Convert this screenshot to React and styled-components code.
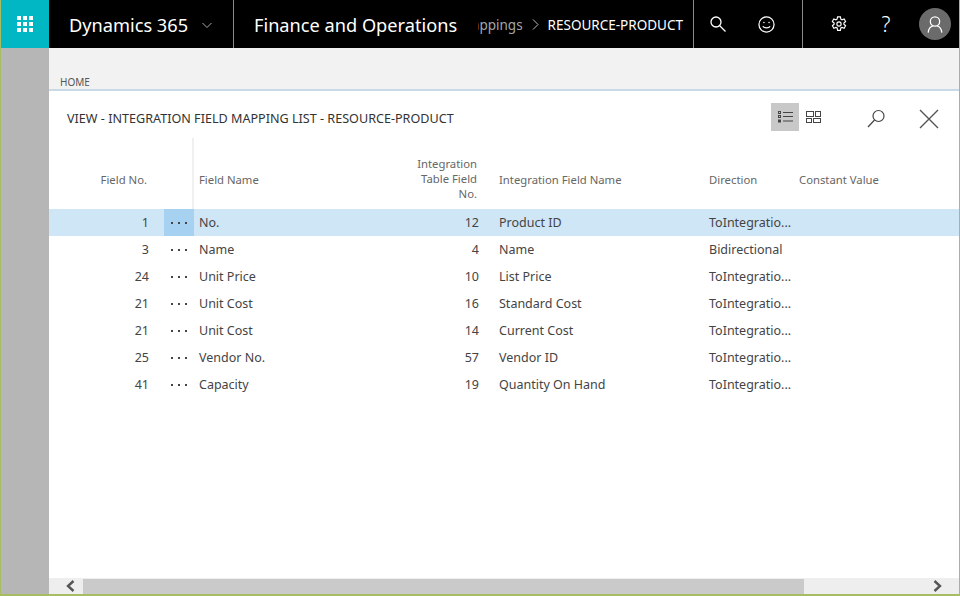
import React from 'react';
import styled, { createGlobalStyle } from 'styled-components';

const GlobalStyle = createGlobalStyle`
  html, body {
    margin: 0;
    padding: 0;
    background: #fff;
    overflow: hidden;
  }
  * { box-sizing: border-box; }
`;

const fontStack = '"Noto Sans", "Open Sans", "Liberation Sans", sans-serif';

const Frame = styled.div`
  width: 960px;
  height: 596px;
  display: flex;
  flex-direction: column;
  border: 1px solid #a6bd63;
  border-top: 0;
  border-bottom-width: 2px;
  font-family: ${fontStack};
  overflow: hidden;
`;

// Top navigation bar
const TopBar = styled.header`
  height: 48px;
  flex: none;
  display: flex;
  align-items: stretch;
  background: #000;
  color: #fff;
  & > * { flex: none; }
`;

const Waffle = styled.button`
  width: 48px;
  border: 0;
  padding: 0;
  background: #00b7c3;
  display: flex;
  align-items: center;
  justify-content: center;
`;

const BrandArea = styled.div`
  width: 185px;
  display: flex;
  align-items: center;
  padding: 2px 0 0 20px;
  gap: 14px;
  font-size: 18.2px;
  border-right: 1px solid #8a8a8a;
`;

const AppName = styled.div`
  width: 244px;
  padding: 2px 0 0 20px;
  display: flex;
  align-items: center;
  font-size: 18.2px;
  white-space: nowrap;
`;

const Crumbs = styled.div`
  width: 216px;
  display: flex;
  align-items: center;
  justify-content: flex-end;
  gap: 9px;
  padding: 1px 10px 0 0;
  overflow: hidden;
  white-space: nowrap;
  font-size: 13.5px;
  border-right: 1px solid #8a8a8a;
`;

const CrumbParent = styled.span`
  color: #a6a6a6;
  flex: none;
`;

const CrumbCurrent = styled.span`
  flex: none;
`;

const CrumbArrow = styled.svg`
  flex: none;
`;

const SearchGroup = styled.div`
  width: 109px;
  display: flex;
  align-items: center;
  justify-content: space-between;
  padding: 0 24px 0 12px;
  border-right: 1px solid #8a8a8a;
`;

const UserGroup = styled.div`
  width: 156px;
  display: flex;
  align-items: center;
  gap: 23px;
  padding-left: 24px;
`;

const TopIcon = styled.span`
  width: 24px;
  height: 24px;
  display: flex;
  align-items: center;
  justify-content: center;
  font-size: 21px;
  font-weight: 300;
`;

const Avatar = styled.span`
  width: 32px;
  height: 32px;
  margin-left: -2px;
  border-radius: 50%;
  background: #6b6b6b;
  display: flex;
  align-items: center;
  justify-content: center;
`;

const Body = styled.div`
  flex: 1;
  min-height: 0;
  display: flex;
`;

const Rail = styled.aside`
  width: 48px;
  flex: none;
  background: #b6b6b6;
`;

const Main = styled.main`
  flex: 1;
  min-width: 0;
  display: flex;
  flex-direction: column;
`;

const Ribbon = styled.div`
  height: 43px;
  flex: none;
  background: #f2f2f2;
  border-bottom: 2px solid #c9d9e6;
  padding: 27px 0 0 11px;
  font-size: 10px;
  line-height: 14px;
  color: #555;
`;

const PanelHead = styled.div`
  height: 47px;
  flex: none;
  display: flex;
  align-items: center;
  padding: 5px 0 0 18px;
`;

const PanelTitle = styled.h1`
  flex: 1;
  margin: 2px 0 0;
  font-size: 12.6px;
  font-weight: 400;
  color: #333;
  white-space: nowrap;
`;

const ViewButton = styled.span`
  width: 28px;
  height: 28px;
  display: flex;
  align-items: center;
  justify-content: center;
  background: ${p => (p.$active ? '#c8c8c8' : 'transparent')};
`;

const PanelSearch = styled.span`
  width: 28px;
  height: 28px;
  margin: 3px 0 0 35px;
  display: flex;
  align-items: center;
  justify-content: center;
`;

const PanelClose = styled.span`
  width: 28px;
  height: 28px;
  margin: 4px 16px 0 25px;
  display: flex;
  align-items: center;
  justify-content: center;
`;

const Grid = styled.div`
  flex: 1;
  min-height: 0;
  --cols: 115px 30px 179px 108px 222px 90px 1fr;
`;

const HeadRow = styled.div`
  display: grid;
  grid-template-columns: var(--cols);
  height: 71px;
  align-items: center;
`;

const HeadCell = styled.div`
  margin-top: 11px;
  font-size: 11.3px;
  line-height: 15px;
  color: #666;
  padding-left: ${p => (p.$right ? 0 : p.$indent ?? 6)}px;
  padding-right: ${p => (p.$right ? p.$indent : 0)}px;
  text-align: ${p => (p.$right ? 'right' : 'left')};
  white-space: nowrap;
`;

const StackedHeadCell = styled(HeadCell)`
  margin-top: 9px;
`;

const HeadGap = styled.div`
  align-self: stretch;
  border-right: 2px solid #f0f0f0;
`;

const Row = styled.div`
  display: grid;
  grid-template-columns: var(--cols);
  height: 27px;
  align-items: center;
  background: ${p => (p.$selected ? '#cfe6f7' : 'transparent')};
`;

const Cell = styled.div`
  font-size: 12.5px;
  color: #444;
  height: 100%;
  line-height: 27px;
  padding-left: ${p => p.$indent ?? 6}px;
  white-space: nowrap;
  overflow: hidden;
`;

const NumCell = styled(Cell)`
  padding-left: 0;
  padding-right: ${p => p.$indent}px;
  text-align: right;
`;

const DotsCell = styled.div`
  height: 100%;
  display: flex;
  align-items: center;
  justify-content: center;
  gap: 5px;
  background: ${p => (p.$selected ? '#a6d1f0' : 'transparent')};
`;

const Dot = styled.i`
  width: 2px;
  height: 2px;
  background: #444;
`;

const ScrollBar = styled.div`
  height: 16px;
  flex: none;
  display: flex;
  align-items: center;
  background: #eeeeee;
`;

const ScrollArrow = styled.span`
  width: 34px;
  flex: none;
  display: flex;
  align-items: center;
  justify-content: center;
  padding-left: ${p => (p.$side === 'left' ? 8 : 0)}px;
  padding-right: ${p => (p.$side === 'right' ? 8 : 0)}px;
`;

const ScrollTrack = styled.div`
  flex: 1;
  height: 15px;
  margin-top: 1px;
`;

const ScrollThumb = styled.div`
  width: 721px;
  height: 100%;
  background: #cacaca;
`;

const rows = [
  { no: 1, name: 'No.', tableNo: 12, field: 'Product ID', dir: 'ToIntegratio...' },
  { no: 3, name: 'Name', tableNo: 4, field: 'Name', dir: 'Bidirectional' },
  { no: 24, name: 'Unit Price', tableNo: 10, field: 'List Price', dir: 'ToIntegratio...' },
  { no: 21, name: 'Unit Cost', tableNo: 16, field: 'Standard Cost', dir: 'ToIntegratio...' },
  { no: 21, name: 'Unit Cost', tableNo: 14, field: 'Current Cost', dir: 'ToIntegratio...' },
  { no: 25, name: 'Vendor No.', tableNo: 57, field: 'Vendor ID', dir: 'ToIntegratio...' },
  { no: 41, name: 'Capacity', tableNo: 19, field: 'Quantity On Hand', dir: 'ToIntegratio...' },
];

const WaffleIcon = () => (
  <svg width="16" height="16" viewBox="0 0 16 16" fill="#fff">
    {[0, 6, 12].map(y =>
      [0, 6, 12].map(x => <rect key={`${x}-${y}`} x={x} y={y} width="4" height="4" />)
    )}
  </svg>
);

const Chevron = () => (
  <svg width="10" height="7" viewBox="0 0 10 7" fill="none" stroke="#aaa" strokeWidth="1">
    <path d="M0.5 1 L5 5.5 L9.5 1" />
  </svg>
);

const SearchIcon = () => (
  <svg width="18" height="18" viewBox="0 0 18 18" fill="none" stroke="#fff" strokeWidth="1.3">
    <circle cx="7" cy="7" r="5" />
    <path d="M10.5 10.5 L16.5 16.5" />
  </svg>
);

const SmileIcon = () => (
  <svg width="17" height="17" viewBox="0 0 18 18" fill="none" stroke="#fff" strokeWidth="1.3">
    <circle cx="9" cy="9" r="8" />
    <circle cx="6.3" cy="7" r="0.8" fill="#fff" stroke="none" />
    <circle cx="11.7" cy="7" r="0.8" fill="#fff" stroke="none" />
    <path d="M5.2 10.8 C6.5 13.2 11.5 13.2 12.8 10.8" />
  </svg>
);

const GearIcon = () => (
  <svg width="16" height="16" viewBox="0 0 18 18" fill="none" stroke="#fff" strokeWidth="1.3">
    <path d="M7.4 1 h3.2 l.5 2.6 1.3.7 2.4-.9 1.6 2.8-1.9 1.6 v1.5 l1.9 1.6-1.6 2.8-2.4-.9-1.3.7-.5 2.6 H7.4 l-.5-2.6-1.3-.7-2.4.9-1.6-2.8 1.9-1.6 V7.8 L1.5 6.2 3.1 3.4l2.4.9 1.3-.7 z" />
    <circle cx="9" cy="9" r="2.4" />
  </svg>
);

const PersonIcon = () => (
  <svg width="16" height="17" viewBox="0 0 18 20" fill="none" stroke="#fff" strokeWidth="1.5">
    <circle cx="9" cy="6.5" r="5.5" />
    <path d="M1 19.5 C1.5 14.5 4.5 12 6.5 11.5 M17 19.5 C16.5 14.5 13.5 12 11.5 11.5" />
  </svg>
);

const ListIcon = () => (
  <svg width="15" height="12" viewBox="0 0 15 12" fill="none" stroke="#444" strokeWidth="1">
    <rect x="0.5" y="0.5" width="2" height="2" />
    <rect x="0.5" y="4.5" width="2" height="2" />
    <rect x="0.5" y="9" width="2" height="2" />
    <path d="M5 1.5 H15 M5 5.5 H15 M5 10 H15" />
  </svg>
);

const TilesIcon = () => (
  <svg width="15" height="12" viewBox="0 0 15 12" fill="none" stroke="#444" strokeWidth="1">
    <rect x="0.5" y="0.5" width="7" height="5" />
    <rect x="9.5" y="0.5" width="5" height="5" />
    <rect x="0.5" y="7.5" width="5" height="4" />
    <rect x="7.5" y="7.5" width="7" height="4" />
  </svg>
);

const FindIcon = () => (
  <svg width="20" height="20" viewBox="0 0 20 20" fill="none" stroke="#444" strokeWidth="1.2">
    <circle cx="12.5" cy="7" r="5.5" />
    <path d="M8.5 11 L2 18" />
  </svg>
);

const CloseIcon = () => (
  <svg width="20" height="20" viewBox="0 0 20 20" fill="none" stroke="#555" strokeWidth="1.4">
    <path d="M1 1 L19 19 M19 1 L1 19" />
  </svg>
);

const ScrollChevron = ({ dir }) => (
  <svg width="10" height="12" viewBox="0 0 10 12" fill="none" stroke="#555" strokeWidth="2.4">
    <path d={dir === 'left' ? 'M8.5 1 L3 6 L8.5 11' : 'M1.5 1 L7 6 L1.5 11'} />
  </svg>
);

export default function App() {
  return (
    <>
      <GlobalStyle />
      <Frame>
        <TopBar>
          <Waffle aria-label="App launcher"><WaffleIcon /></Waffle>
          <BrandArea>
            Dynamics 365
            <Chevron />
          </BrandArea>
          <AppName>Finance and Operations</AppName>
          <Crumbs>
            <CrumbParent>Mappings</CrumbParent>
            <CrumbArrow width="7" height="11" viewBox="0 0 7 11" fill="none" stroke="#bbb" strokeWidth="1">
              <path d="M1 0.5 L6 5.5 L1 10.5" />
            </CrumbArrow>
            <CrumbCurrent>RESOURCE-PRODUCT</CrumbCurrent>
          </Crumbs>
          <SearchGroup>
            <TopIcon><SearchIcon /></TopIcon>
            <TopIcon><SmileIcon /></TopIcon>
          </SearchGroup>
          <UserGroup>
            <TopIcon><GearIcon /></TopIcon>
            <TopIcon>?</TopIcon>
            <Avatar><PersonIcon /></Avatar>
          </UserGroup>
        </TopBar>
        <Body>
          <Rail />
          <Main>
            <Ribbon>HOME</Ribbon>
            <PanelHead>
              <PanelTitle>VIEW - INTEGRATION FIELD MAPPING LIST - RESOURCE-PRODUCT</PanelTitle>
              <ViewButton $active><ListIcon /></ViewButton>
              <ViewButton><TilesIcon /></ViewButton>
              <PanelSearch><FindIcon /></PanelSearch>
              <PanelClose><CloseIcon /></PanelClose>
            </PanelHead>
            <Grid>
              <HeadRow>
                <HeadCell $right $indent={17}>Field No.</HeadCell>
                <HeadGap />
                <HeadCell $indent={5}>Field Name</HeadCell>
                <StackedHeadCell $right $indent={4}>Integration<br />Table Field<br />No.</StackedHeadCell>
                <HeadCell $indent={18}>Integration Field Name</HeadCell>
                <HeadCell>Direction</HeadCell>
                <HeadCell>Constant Value</HeadCell>
              </HeadRow>
              {rows.map((r, i) => (
                <Row key={i} $selected={i === 0}>
                  <NumCell $indent={15}>{r.no}</NumCell>
                  <DotsCell $selected={i === 0}><Dot /><Dot /><Dot /></DotsCell>
                  <Cell $indent={5}>{r.name}</Cell>
                  <NumCell $indent={2}>{r.tableNo}</NumCell>
                  <Cell $indent={18}>{r.field}</Cell>
                  <Cell>{r.dir}</Cell>
                  <Cell />
                </Row>
              ))}
            </Grid>
            <ScrollBar>
              <ScrollArrow $side="left"><ScrollChevron dir="left" /></ScrollArrow>
              <ScrollTrack><ScrollThumb /></ScrollTrack>
              <ScrollArrow $side="right"><ScrollChevron dir="right" /></ScrollArrow>
            </ScrollBar>
          </Main>
        </Body>
      </Frame>
    </>
  );
}
